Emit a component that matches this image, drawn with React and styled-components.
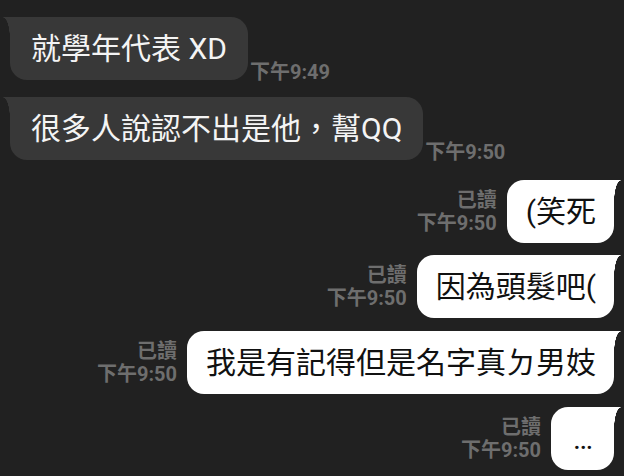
import React from 'react';
import styled, { createGlobalStyle, css } from 'styled-components';

const GlobalStyle = createGlobalStyle`
    html, body {
        margin: 0;
        padding: 0;
        background: #212121;
    }
    body {
        font-family: Roboto, "Noto Sans CJK TC", sans-serif;
        -webkit-font-smoothing: antialiased;
    }
`;

const messages = [
    { id: 1, mine: false, text: '就學年代表 XD', time: '下午9:49', gap: 17 },
    { id: 2, mine: false, text: '很多人說認不出是他，幫QQ', time: '下午9:50', gap: 17 },
    { id: 3, mine: true, text: '(笑死', time: '下午9:50', gap: 20 },
    { id: 4, mine: true, text: '因為頭髮吧(', time: '下午9:50', gap: 12 },
    { id: 5, mine: true, text: '我是有記得但是名字真ㄉ男妓', time: '下午9:50', gap: 13 },
    { id: 6, mine: true, text: '…', time: '下午9:50', gap: 13 }
];

const App = () => {
    return (
        <>
            <GlobalStyle />
            <Chat>
                {messages.map(m => (
                    <Row key={m.id} mine={m.mine} gap={m.gap}>
                        {m.mine ? (
                            <>
                                <Meta mine>
                                    <span>已讀</span>
                                    <span>{m.time}</span>
                                </Meta>
                                <Bubble mine>{m.text}</Bubble>
                            </>
                        ) : (
                            <>
                                <Bubble>{m.text}</Bubble>
                                <Meta>
                                    <span>{m.time}</span>
                                </Meta>
                            </>
                        )}
                    </Row>
                ))}
            </Chat>
        </>
    );
};

const Chat = styled.div`
    width: 624px;
    height: 476px;
    overflow: hidden;
    display: flex;
    flex-direction: column;
`;

const Row = styled.div.withConfig({ shouldForwardProp: p => p !== 'mine' && p !== 'gap' })`
    display: flex;
    align-items: flex-end;
    justify-content: ${p => (p.mine ? 'flex-end' : 'flex-start')};
    margin-top: ${p => p.gap}px;
    padding: ${p => (p.mine ? '0 10px 0 0' : '0 0 0 10px')};
`;

const Bubble = styled.div.withConfig({ shouldForwardProp: p => p !== 'mine' })`
    position: relative;
    box-sizing: border-box;
    min-width: 63px;
    height: 63px;
    line-height: 63px;
    font-size: 30px;
    text-align: center;
    white-space: nowrap;
    border-radius: 17px;
    ${p =>
        p.mine
            ? css`
                  padding: 0 18px 0 19px;
                  background: #ffffff;
                  color: #111111;
                  border-top-right-radius: 0;
                  &::after {
                      content: '';
                      position: absolute;
                      top: 0;
                      right: -7px;
                      width: 7px;
                      height: 22px;
                      background: radial-gradient(ellipse 7px 22px at 100% 100%, transparent 96%, #ffffff 100%);
                  }
              `
            : css`
                  padding: 0 21px;
                  background: #383838;
                  color: #f4f4f4;
                  border-top-left-radius: 0;
                  &::before {
                      content: '';
                      position: absolute;
                      top: 0;
                      left: -7px;
                      width: 7px;
                      height: 22px;
                      background: radial-gradient(ellipse 7px 22px at 0% 100%, transparent 96%, #383838 100%);
                  }
              `}
`;

const Meta = styled.div.withConfig({ shouldForwardProp: p => p !== 'mine' })`
    display: flex;
    flex-direction: column;
    align-items: ${p => (p.mine ? 'flex-end' : 'flex-start')};
    font-size: 20px;
    font-weight: 700;
    line-height: 23px;
    color: #6e6e6e;
    ${p =>
        p.mine
            ? css`
                  margin: 0 10px 8px 0;
              `
            : css`
                  margin: 0 0 -4px 2px;
              `}
`;

export default App;
